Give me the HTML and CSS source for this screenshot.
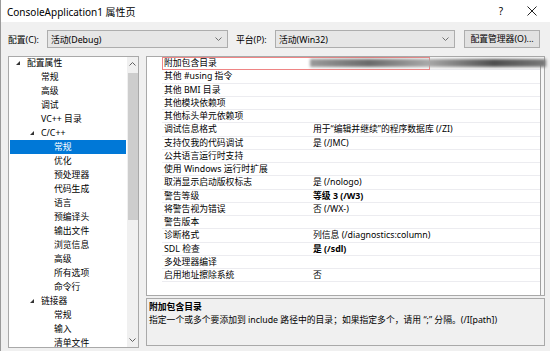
FILE: index.html
```html
<!DOCTYPE HTML>
<html>
	<head>
		<title>ConsoleApplication1 属性页</title>
		<meta charset="utf-8">
		<link rel="stylesheet" href="styles.css">
	</head>
	<body>
		<div class="window">
			<div class="titlebar">
				<span class="title">ConsoleApplication1 属性页</span>
				<span class="help">?</span>
				<svg class="close" width="10" height="10" viewBox="0 0 10 10"><path d="M0.5 0.5L9.5 9.5M9.5 0.5L0.5 9.5" stroke="#222" stroke-width="1" fill="none"/></svg>
			</div>

			<div class="config">
				<span class="lbl">配置(C):</span>
				<div class="combo combo-cfg">
					<span>活动(Debug)</span>
					<svg width="7" height="4" viewBox="0 0 7 4"><path d="M0.5 0.5L3.5 3.5L6.5 0.5" stroke="#707070" fill="none"/></svg>
				</div>
				<span class="lbl lbl-plat">平台(P):</span>
				<div class="combo combo-plat">
					<span>活动(Win32)</span>
					<svg width="7" height="4" viewBox="0 0 7 4"><path d="M0.5 0.5L3.5 3.5L6.5 0.5" stroke="#707070" fill="none"/></svg>
				</div>
				<div class="btn">配置管理器(O)...</div>
			</div>

			<div class="main">
				<div class="tree">
					<ul class="tree-list">
						<li class="lv0"><i class="tri"></i>配置属性</li>
						<li class="lv1">常规</li>
						<li class="lv1">高级</li>
						<li class="lv1">调试</li>
						<li class="lv1">VC++ 目录</li>
						<li class="lv1 open"><i class="tri"></i>C/C++</li>
						<li class="lv2 sel">常规</li>
						<li class="lv2">优化</li>
						<li class="lv2">预处理器</li>
						<li class="lv2">代码生成</li>
						<li class="lv2">语言</li>
						<li class="lv2">预编译头</li>
						<li class="lv2">输出文件</li>
						<li class="lv2">浏览信息</li>
						<li class="lv2">高级</li>
						<li class="lv2">所有选项</li>
						<li class="lv2">命令行</li>
						<li class="lv1 open"><i class="tri"></i>链接器</li>
						<li class="lv2">常规</li>
						<li class="lv2">输入</li>
						<li class="lv2">清单文件</li>
					</ul>
					<div class="vscroll">
						<svg class="arr" width="7" height="4" viewBox="0 0 7 4"><path d="M0.5 3.5L3.5 0.5L6.5 3.5" stroke="#606060" fill="none"/></svg>
						<div class="thumb"></div>
						<div class="track"></div>
						<svg class="arr" width="7" height="4" viewBox="0 0 7 4"><path d="M0.5 0.5L3.5 3.5L6.5 0.5" stroke="#606060" fill="none"/></svg>
					</div>
				</div>

				<div class="right">
					<div class="grid">
						<div class="rows">
							<div class="row first">
								<span class="name">附加包含目录</span><span class="val"></span>
								<div class="focus"></div>
								<div class="smear"></div>
							</div>
							<div class="row"><span class="name">其他 #using 指令</span><span class="val"></span></div>
							<div class="row"><span class="name">其他 BMI 目录</span><span class="val"></span></div>
							<div class="row"><span class="name">其他模块依赖项</span><span class="val"></span></div>
							<div class="row"><span class="name">其他标头单元依赖项</span><span class="val"></span></div>
							<div class="row"><span class="name">调试信息格式</span><span class="val">用于“编辑并继续”的程序数据库 (/ZI)</span></div>
							<div class="row"><span class="name">支持仅我的代码调试</span><span class="val">是 (/JMC)</span></div>
							<div class="row"><span class="name">公共语言运行时支持</span><span class="val"></span></div>
							<div class="row"><span class="name">使用 Windows 运行时扩展</span><span class="val"></span></div>
							<div class="row"><span class="name">取消显示启动版权标志</span><span class="val">是 (/nologo)</span></div>
							<div class="row"><span class="name">警告等级</span><span class="val bold">等级 3 (/W3)</span></div>
							<div class="row"><span class="name">将警告视为错误</span><span class="val">否 (/WX-)</span></div>
							<div class="row"><span class="name">警告版本</span><span class="val"></span></div>
							<div class="row"><span class="name">诊断格式</span><span class="val">列信息 (/diagnostics:column)</span></div>
							<div class="row"><span class="name">SDL 检查</span><span class="val bold">是 (/sdl)</span></div>
							<div class="row"><span class="name">多处理器编译</span><span class="val"></span></div>
							<div class="row"><span class="name">启用地址擦除系统</span><span class="val">否</span></div>
						</div>
						<div class="edge"></div>
					</div>
					<div class="desc">
						<p class="desc-title">附加包含目录</p>
						<p class="desc-text">指定一个或多个要添加到 include 路径中的目录；如果指定多个，请用 “;” 分隔。(/I[path])</p>
					</div>
				</div>
			</div>
		</div>
	</body>
</html>
```

FILE: styles.css
```css
*{ margin:0; padding:0; box-sizing:border-box; }
body{ width:550px; height:351px; overflow:hidden; background:#f0f0f0; font-family:"Noto Sans","Noto Sans CJK SC",sans-serif; font-size:8.8px; color:#000; }
.window{ width:550px; height:351px; border-left:1px solid #9a9a9a; background:#f0f0f0; }

.titlebar{ height:22px; background:#fff; display:flex; align-items:center; padding-left:6px; }
.title{ font-size:10px; flex:1; }
.help{ font-size:10px; margin-right:24px; }
.close{ margin-right:13px; }

.config{ display:flex; align-items:center; height:18px; margin-top:8px; padding-left:7px; }
.lbl{ width:39px; }
.lbl-plat{ margin-left:8px; }
.combo{ height:18px; background:#e6e6e6; border:1px solid #adadad; display:flex; align-items:center; justify-content:space-between; padding:0 5px 0 3px; }
.combo-cfg{ width:181px; }
.combo-plat{ width:180px; }
.btn{ width:76px; height:18px; margin-left:9px; background:#e1e1e1; border:1px solid #adadad; text-align:center; line-height:16px; }

.main{ display:flex; align-items:flex-start; gap:7px; margin-top:8px; padding-left:7px; height:292px; }

.tree{ width:131px; height:292px; background:#fff; border:1px solid #a9a9a9; display:flex; overflow:hidden; }
.tree-list{ list-style:none; flex:1; padding:0 1px; margin-top:-1px; }
.tree-list li{ height:14px; line-height:14px; white-space:nowrap; display:flex; align-items:center; }
.lv0{ padding-left:6px; }
.lv1{ padding-left:31px; }
.lv1.open{ padding-left:20px; }
.lv2{ padding-left:44px; }
.sel{ background:#0078d7; color:#fff; }
.tri{ display:inline-block; width:0; height:0; border-left:4px solid transparent; border-bottom:4px solid #333; margin-right:7px; }

.vscroll{ width:11px; background:#f0f0f0; display:flex; flex-direction:column; align-items:center; }
.arr{ margin:5px 0; flex:none; }
.thumb{ width:10px; height:147px; background:#cdcdcd; margin-top:2px; }
.track{ flex:1; }

.right{ width:399px; display:flex; flex-direction:column; gap:2px; }
.grid{ height:240px; background:#fff; border:1px solid #a9a9a9; display:flex; }
.rows{ flex:1; padding-left:15px; }
.edge{ width:4px; border-left:1px solid #a0a0a0; background:#f7f7f7; margin-top:8px; }
.row{ position:relative; display:flex; height:13.25px; line-height:12px; border-bottom:1px solid #ececf0; white-space:nowrap; }
.name{ width:150px; padding-left:2px; }
.val{ flex:1; padding-left:1px; }
.bold{ font-weight:bold; }
.focus{ position:absolute; left:0; top:0; width:268px; height:13px; border:1px solid #ef8585; }
.smear{ position:absolute; left:148px; top:2px; width:236px; height:8px; background:linear-gradient(90deg,#9a9a9a 0%,#6a6a6a 25%,#a8a8a8 50%,#4e4e4e 78%,#7a7a7a 100%); filter:blur(1.4px); }

.desc{ height:48px; background:#f0f0f0; border:1px solid #a9a9a9; padding:2px 2px; }
.desc-title{ font-weight:bold; line-height:13px; }
.desc-text{ line-height:13px; }
```
